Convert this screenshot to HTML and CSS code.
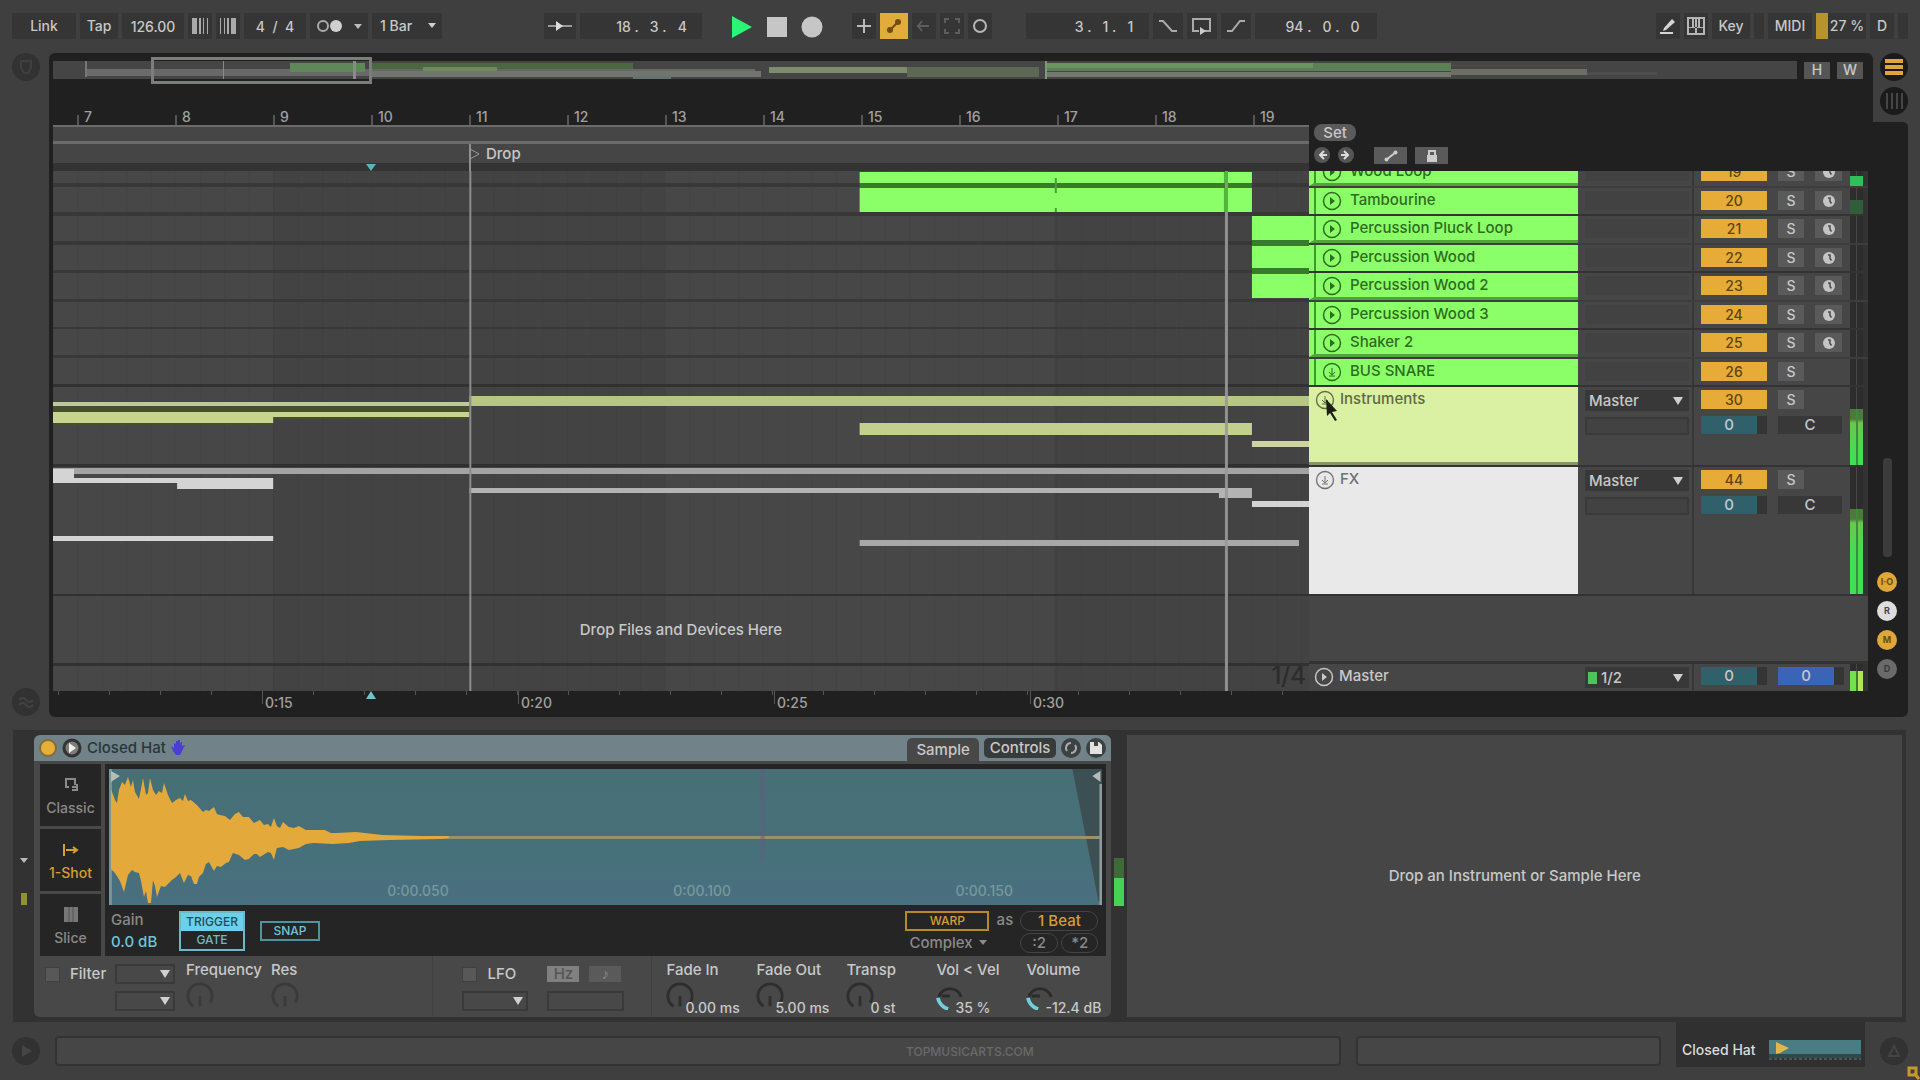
FILE: index.html
```html
<!DOCTYPE html>
<html lang="en">
<head>
  <meta charset="UTF-8" />
  <meta name="viewport" content="width=device-width, initial-scale=1.0"/>
  <title>Arrangement</title>
  <link rel="stylesheet" href="styles.css">
</head>
<body>

  <svg width="0" height="0" class="defs" aria-hidden="true">
    <symbol id="play-ring" viewBox="0 0 20 20">
      <circle cx="10" cy="10" r="8.5" fill="none" stroke="currentColor" stroke-width="1.5"/>
      <path d="M8 6l5 4-5 4z" fill="currentColor"/>
    </symbol>
    <symbol id="fold-ring" viewBox="0 0 20 20">
      <circle cx="10" cy="10" r="8.5" fill="none" stroke="currentColor" stroke-width="1.3"/>
      <path d="M10 6v6M7 10l3 3 3-3M7 14h6" fill="none" stroke="currentColor" stroke-width="1"/>
    </symbol>
    <symbol id="rec" viewBox="0 0 14 14">
      <circle cx="7" cy="7" r="6" fill="#c4c4c4"/>
      <path d="M6 4h2v3.500l1.500 2" fill="none" stroke="#4a4a4a" stroke-width="1.500"/>
    </symbol>
    <symbol id="knob" viewBox="0 0 30 30">
      <path d="M8 26A13 13 0 1 1 26 22" fill="none" stroke="currentColor" stroke-width="3"/>
      <path d="M15 15v11" stroke="currentColor" stroke-width="3"/>
    </symbol>
    <symbol id="knob-on" viewBox="0 0 30 30">
      <path d="M3 16A12.500 12.500 0 0 1 27 16" fill="none" stroke="#2b2b2b" stroke-width="3"/>
      <path d="M15 15H6" stroke="#2b2b2b" stroke-width="3"/>
      <path d="M2 17Q4 26 13 29" fill="none" stroke="#6fd0dc" stroke-width="4"/>
    </symbol>
  </svg>

  <header class="toolbar">
    <div class="tools">
      <button class="tool w-link">Link</button>
      <button class="tool w-tap">Tap</button>
      <input class="tool w-tempo" aria-label="Tempo" value="126.00">
      <button class="tool w-nudge" aria-label="Nudge down"><svg width="20" height="16"><path d="M2 0h5v16H2zM9 0h2v16H9zM13 0h1v16h-1zM17 0h1v16h-1z" fill="#aaa"/></svg></button>
      <button class="tool w-nudge" aria-label="Nudge up"><svg width="20" height="16"><path d="M2 0h1v16H2zM6 0h1v16H6zM9 0h2v16H9zM13 0h5v16h-5z" fill="#aaa"/></svg></button>
      <input class="tool w-sig" aria-label="Time signature" value="4  /  4">
      <button class="tool w-metro" aria-label="Metronome"><svg width="28" height="14"><circle cx="7" cy="7" r="5" fill="none" stroke="#aaa" stroke-width="2"/><circle cx="20" cy="7" r="6" fill="#d0d0d0"/></svg><span class="caret"></span></button>
      <span class="pick small w-bar"><select class="tool" aria-label="Quantization"><option>1 Bar</option></select></span>
    </div>

    <div class="tools center">
      <button class="tool w-follow" aria-label="Follow"><svg width="24" height="14"><path d="M0 7h24" stroke="#999" stroke-width="2"/><path d="M8 2l7 5-7 5z" fill="#ddd"/></svg></button>
      <input class="tool w-pos" aria-label="Arrangement position" value="18 .   3 .   4">
      <span class="transport">
        <button class="bare" aria-label="Play"><svg width="22" height="24"><path d="M1 1l20 11L1 23z" fill="#2bf577"/></svg></button>
        <button class="bare" aria-label="Stop"><svg width="22" height="24"><path d="M1 2h20v20H1z" fill="#c6c6c6"/></svg></button>
        <button class="bare" aria-label="Record"><svg width="22" height="24"><circle cx="11" cy="12" r="10.500" fill="#c6c6c6"/></svg></button>
      </span>
      <button class="tool w-plus" aria-label="Overdub"><svg width="16" height="16"><path d="M8 1v14M1 8h14" stroke="#bbb" stroke-width="2"/></svg></button>
      <button class="tool w-auto on" aria-label="Automation arm"><svg width="18" height="18"><path d="M4 14L14 4" stroke="#6d4d10" stroke-width="2"/><circle cx="5" cy="13" r="3" fill="#6d4d10"/><circle cx="13" cy="5" r="3" fill="#6d4d10"/></svg></button>
      <button class="tool w-plus" aria-label="Re-enable automation"><svg width="14" height="12"><path d="M0 6h12M5 1L1 6l4 5" fill="none" stroke="#5d5d5d" stroke-width="2"/></svg></button>
      <button class="tool w-plus" aria-label="Capture"><svg width="16" height="16"><path d="M1 5V1h4M11 1h4v4M15 11v4h-4M5 15H1v-4" fill="none" stroke="#5d5d5d" stroke-width="2"/></svg></button>
      <button class="tool w-plus" aria-label="Session record"><svg width="16" height="16"><circle cx="8" cy="8" r="6" fill="none" stroke="#b5b5b5" stroke-width="2"/></svg></button>
      <input class="tool w-loop" aria-label="Loop start" value="3 .   1 .   1">
      <button class="tool w-punch" aria-label="Punch in"><svg width="20" height="16"><path d="M1 3h4l9 10h5" fill="none" stroke="#aaa" stroke-width="2"/></svg></button>
      <button class="tool w-punch" aria-label="Loop"><svg width="22" height="18"><path d="M8 14H2V2h17v12h-5" fill="none" stroke="#aaa" stroke-width="2"/><path d="M9 10l6 4-6 4z" fill="#ccc"/></svg></button>
      <button class="tool w-punch" aria-label="Punch out"><svg width="20" height="16"><path d="M1 13h5l8-10h5" fill="none" stroke="#aaa" stroke-width="2"/></svg></button>
      <input class="tool w-len" aria-label="Loop length" value="94 .   0 .   0">
    </div>

    <div class="tools right">
      <button class="tool w-nudge" aria-label="Draw mode"><svg width="18" height="18"><path d="M5 11l8-9 3 3-9 8-3 1z" fill="#d5d5d5"/><path d="M1 16h13" stroke="#d5d5d5" stroke-width="2"/></svg></button>
      <button class="tool w-nudge" aria-label="Computer keyboard"><svg width="18" height="18"><path d="M1 1h16v16H1z" fill="none" stroke="#b5b5b5" stroke-width="2"/><path d="M5 1v9h2V1zM11 1v9h2V1zM8 1v16h2V1zM1 10h16v1H1z" fill="#b5b5b5"/></svg></button>
      <button class="tool w-key">Key</button>
      <span class="tool led"></span>
      <button class="tool w-midi">MIDI</button>
      <span class="tool cpu">27 %</span>
      <span class="tool w-nudge">D</span>
      <span class="tool led"></span>
    </div>
  </header>

  <main class="view">
    <div class="gutter">
      <button class="round dim" aria-label="Show browser"><svg width="14" height="16"><path d="M2 2h10v7l-3 5H5L2 9z" fill="none" stroke="#3f3f3f" stroke-width="2"/></svg></button>
      <button class="round dim" aria-label="Groove pool"><svg width="16" height="12"><path d="M1 4q4-4 7 0t7 0M1 9q4-4 7 0t7 0" fill="none" stroke="#424242" stroke-width="2"/></svg></button>
    </div>

    <section class="panel">
      <div class="overview">
        <svg class="overview-map" viewBox="0 0 1744 18" preserveAspectRatio="none">
          <rect width="1744" height="18" fill="#454545"/>
          <path d="M32 8h70v7H32z" fill="#6b6b6b"/>
          <path d="M102 8h600v7H102z" fill="#686868"/>
          <path d="M32 0h2v16h-2z" fill="#777"/>
          <path d="M237 2h75v9h-75z" fill="#5f8759"/>
          <path d="M318 2h262v6H318z" fill="#4c6842"/>
          <path d="M370 6h74v5h-74z" fill="#6e8a5c"/>
          <path d="M318 10h390v6H318z" fill="#70756d"/>
          <path d="M580 15h38v3h-38z" fill="#66736f"/>
          <path d="M716 6h138v6H716z" fill="#7c8c6d"/>
          <path d="M854 6h132v10H854z" fill="#5c6853"/>
          <path d="M992 2h406v8H992z" fill="#5d7f56"/>
          <path d="M992 2h268v5H992z" fill="#6a9560"/>
          <path d="M992 11h406v5H992z" fill="#75786f"/>
          <path d="M1398 8h136v6h-136z" fill="#6d6f65"/>
          <path d="M1398 4h136v1h-136z" fill="#574c4a"/>
          <path d="M1534 11h70v3h-70z" fill="#4d4d4d"/>
          <path d="M992 0h2v18h-2z" fill="#7d9a76"/>
          <path d="M170 0h1v18h-1zM300 0h3v18h-3z" fill="#8a8a8a"/>
        </svg>
        <div class="overview-window"></div>
        <button class="hw">H</button>
        <button class="hw">W</button>
      </div>

      <div class="timeline">
        <div class="bars">
          <span>7</span><span>8</span><span>9</span><span>10</span><span>11</span><span>12</span><span>13</span><span>14</span><span>15</span><span>16</span><span>17</span><span>18</span><span>19</span>
        </div>
        <div class="scrub"></div>
        <div class="locators">
          <svg width="12" height="14"><path d="M1 2l9 5-9 5z" fill="none" stroke="#999" stroke-width="1"/></svg>
          <span>Drop</span>
        </div>
        <div class="start-lane"><svg width="10" height="8"><path d="M0 1h10L5 8z" fill="#58b4bd"/></svg></div>

        <div class="lanes">
          <svg class="clips" viewBox="0 0 1255 520" preserveAspectRatio="none">
            <defs>
              <pattern id="beats" width="24.450" height="520" patternUnits="userSpaceOnUse"><path d="M0 0h1v520H0z" fill="#000" opacity="0.050"/></pattern>
            </defs>
            <rect width="1255" height="520" fill="#434343"/>
            <path d="M0 0h220v520H0zM611 0h390v520H611z" fill="#474747"/>
            <rect width="1255" height="520" fill="url(#beats)"/>
            <path d="M0 12h1255v4H0zM0 41h1255v4H0zM0 70h1255v4H0zM0 99h1255v3H0zM0 128h1255v3H0zM0 156h1255v2H0zM0 184h1255v3H0z" fill="#383838"/>
            <path d="M0 213h1255v3H0zM0 293h1255v3H0zM0 423h1255v2H0zM0 492h1255v3H0z" fill="#313131"/>
            <!-- percussion group -->
            <path d="M806 12h392v5H806zM1198 69h57v6h-57zM1198 97h57v6h-57z" fill="#377c28"/>
            <path d="M806 1h392v11H806zM806 17h392v24H806zM1198 45h57v24h-57zM1198 75h57v22h-57zM1198 103h57v24h-57z" fill="#8aff67"/>
            <path d="M1001 7h2v15h-2zM1001 37h2v4h-2z" fill="#4e9c3b"/>
            <!-- instruments -->
            <path d="M0 234h416v7H0zM0 252h220v2H0zM220 246h196v2H220z" fill="#44502b"/>
            <path d="M0 231h416v4H0z" fill="#bfc79c"/>
            <path d="M0 241h416v5H0zM0 241h220v11H0z" fill="#c6d48e"/>
            <path d="M416 225h839v10H416z" fill="#b7c685"/>
            <path d="M806 252h392v12H806z" fill="#c2cf8d"/>
            <path d="M1198 270h57v6h-57z" fill="#cdd3a2"/>
            <!-- fx -->
            <path d="M0 297h1255v6H0z" fill="#a3a3a3"/>
            <path d="M0 298h21v13H0zM0 307h220v5H0zM124 307h96v11h-96zM0 365h220v5H0zM1198 330h57v6h-57z" fill="#d4d4d4"/>
            <path d="M416 317h782v5H416zM1165 317h33v10h-33z" fill="#b3b3b3"/>
            <path d="M806 369h439v6H806z" fill="#a8a8a8"/>
            <path d="M416 0h2v520h-2z" fill="#8d8d8d"/>
            <path d="M1171 0h3v520h-3z" fill="#999" opacity="0.900"/>
            <path d="M1170 1h4v11h-4zM1170 17h4v24h-4z" fill="#52b63a"/>
          </svg>
          <p class="drop-hint">Drop Files and Devices Here</p>
          <span class="grid-size">1/4</span>
        </div>

        <div class="seconds">
          <span>0:15</span><span>0:20</span><span>0:25</span><span>0:30</span>
          <svg class="start-mark" width="12" height="9"><path d="M6 0l5 8H1z" fill="#6fc3cb"/></svg>
        </div>
      </div>

      <div class="headers">
        <div class="set-bar">
          <button class="pill">Set</button>
          <div class="set-row">
            <button class="dot" aria-label="Previous locator"><svg width="10" height="10"><path d="M7 1L3 5l4 4M3 5h7" fill="none" stroke="#ddd" stroke-width="2"/></svg></button>
            <button class="dot" aria-label="Next locator"><svg width="10" height="10"><path d="M3 1l4 4-4 4M7 5H0" fill="none" stroke="#ddd" stroke-width="2"/></svg></button>
            <button class="tag" aria-label="Automation mode"><svg width="14" height="12"><path d="M2 10L12 2" stroke="#ccc" stroke-width="2"/><circle cx="2.500" cy="9.500" r="2" fill="#ccc"/><circle cx="11.500" cy="2.500" r="2" fill="#ccc"/></svg></button>
            <button class="tag" aria-label="Lock envelopes"><svg width="12" height="12"><path d="M1 5h10v7H1z" fill="#ccc"/><path d="M3 5V1h6v4" fill="none" stroke="#ccc" stroke-width="2"/></svg></button>
          </div>
        </div>

        <div class="track child cut linked">
          <div class="name"><svg class="ico"><use href="#play-ring"/></svg>Wood Loop</div><div class="io"><span class="slot"></span></div>
          <div class="mix"><button class="num">19</button><button class="sq">S</button><button class="sq" aria-label="Arm"><svg width="14" height="14"><use href="#rec"/></svg></button></div>
          <div class="meter"><i class="lvl low"></i></div>
        </div>
        <div class="track child">
          <div class="name"><svg class="ico"><use href="#play-ring"/></svg>Tambourine</div><div class="io"><span class="slot"></span></div>
          <div class="mix"><button class="num">20</button><button class="sq">S</button><button class="sq" aria-label="Arm"><svg width="14" height="14"><use href="#rec"/></svg></button></div>
          <div class="meter"><i class="lvl faint"></i></div>
        </div>
        <div class="track child linked">
          <div class="name"><svg class="ico"><use href="#play-ring"/></svg>Percussion Pluck Loop</div><div class="io"><span class="slot"></span></div>
          <div class="mix"><button class="num">21</button><button class="sq">S</button><button class="sq" aria-label="Arm"><svg width="14" height="14"><use href="#rec"/></svg></button></div>
          <div class="meter"></div>
        </div>
        <div class="track child">
          <div class="name"><svg class="ico"><use href="#play-ring"/></svg>Percussion Wood</div><div class="io"><span class="slot"></span></div>
          <div class="mix"><button class="num">22</button><button class="sq">S</button><button class="sq" aria-label="Arm"><svg width="14" height="14"><use href="#rec"/></svg></button></div>
          <div class="meter"></div>
        </div>
        <div class="track child linked">
          <div class="name"><svg class="ico"><use href="#play-ring"/></svg>Percussion Wood 2</div><div class="io"><span class="slot"></span></div>
          <div class="mix"><button class="num">23</button><button class="sq">S</button><button class="sq" aria-label="Arm"><svg width="14" height="14"><use href="#rec"/></svg></button></div>
          <div class="meter"></div>
        </div>
        <div class="track child">
          <div class="name"><svg class="ico"><use href="#play-ring"/></svg>Percussion Wood 3</div><div class="io"><span class="slot"></span></div>
          <div class="mix"><button class="num">24</button><button class="sq">S</button><button class="sq" aria-label="Arm"><svg width="14" height="14"><use href="#rec"/></svg></button></div>
          <div class="meter"></div>
        </div>
        <div class="track child linked">
          <div class="name"><svg class="ico"><use href="#play-ring"/></svg>Shaker 2</div><div class="io"><span class="slot"></span></div>
          <div class="mix"><button class="num">25</button><button class="sq">S</button><button class="sq" aria-label="Arm"><svg width="14" height="14"><use href="#rec"/></svg></button></div>
          <div class="meter"></div>
        </div>
        <div class="track child">
          <div class="name"><svg class="ico"><use href="#fold-ring"/></svg>BUS SNARE</div><div class="io"><span class="slot"></span></div>
          <div class="mix"><button class="num">26</button><button class="sq">S</button></div>
          <div class="meter"></div>
        </div>

        <div class="track group instruments">
          <div class="name"><svg class="ico"><use href="#fold-ring"/></svg>Instruments
            <svg class="cursor" width="16" height="24"><path d="M1 0l11 12-5 1 5 8-2 1-5-8-3 3z" fill="#1c1f14"/></svg>
          </div>
          <div class="io"><span class="pick"><select aria-label="Instruments output"><option>Master</option></select></span><span class="slot box"></span></div>
          <div class="mix"><button class="num">30</button><button class="sq">S</button><span class="vol">0</span><span class="pan">C</span></div>
          <div class="meter"><i class="lvl"></i></div>
        </div>
        <div class="track group fx">
          <div class="name"><svg class="ico"><use href="#fold-ring"/></svg>FX</div>
          <div class="io"><span class="pick"><select aria-label="FX output"><option>Master</option></select></span><span class="slot box"></span></div>
          <div class="mix"><button class="num">44</button><button class="sq">S</button><span class="vol">0</span><span class="pan">C</span></div>
          <div class="meter"><i class="lvl"></i></div>
        </div>
        <div class="blank"></div>
        <div class="track master">
          <div class="name"><svg class="ico"><use href="#play-ring"/></svg>Master</div>
          <div class="io"><span class="pick out"><select aria-label="Master output"><option>1/2</option></select></span></div>
          <div class="mix"><span class="vol">0</span><span class="vol cue">0</span></div>
          <div class="meter"><i class="lvl"></i></div>
        </div>
      </div>
    </section>

    <aside class="side">
      <div class="switch">
        <button class="round black" aria-label="Arrangement view"><svg width="18" height="18"><path d="M0 1h18v4H0zM0 7h18v4H0zM0 13h18v4H0z" fill="#e0a63a"/></svg></button>
        <button class="round black" aria-label="Session view"><svg width="18" height="18"><path d="M2 1v16M7 1v16M12 1v16M17 1v16" stroke="#454545" stroke-width="2"/></svg></button>
      </div>
      <div class="side-body">
        <div class="thumb"></div>
        <button class="toggle amber">I·O</button>
        <button class="toggle light">R</button>
        <button class="toggle amber">M</button>
        <button class="toggle gray">D</button>
      </div>
    </aside>
  </main>

  <section class="devices">
    <div class="in-meter"><span class="caret"></span><i></i></div>

    <article class="simpler">
      <header class="device-head">
        <span class="power"></span>
        <svg class="head-play" width="20" height="20"><circle cx="10" cy="10" r="8" fill="#7d7f7d" stroke="#333" stroke-width="3"/><path d="M7 5l7 5-7 5z" fill="#f0f0f0"/></svg>
        <h2>Closed Hat</h2>
        <svg width="14" height="16"><path d="M3 3l2 1V1h2v3V0h2v4l1-2h1v4l3-1-3 6-2 4H5L2 11 0 6l3 2z" fill="#4a3fd0"/></svg>
        <button class="tab active">Sample</button>
        <button class="tab">Controls</button>
        <button class="mini" aria-label="Hot-swap"><svg width="14" height="14"><path d="M7 2a5 5 0 0 0-4 8M7 12a5 5 0 0 0 4-8" fill="none" stroke="#aaa" stroke-width="2"/></svg></button>
        <button class="mini" aria-label="Save preset"><svg width="12" height="12"><path d="M0 0h9l3 3v9H0z" fill="#e2e2e2"/><path d="M4 0h4v4H4z" fill="#444"/></svg></button>
      </header>

      <div class="sampler">
        <nav class="modes">
          <button><svg width="16" height="16"><path d="M6 11H3V3h9v6M9 11l5 0M14 8v6H9" fill="none" stroke="#8a8a8a" stroke-width="2"/></svg>Classic</button>
          <button class="active"><svg width="18" height="14"><path d="M2 1v12M4 7h10M11 4l4 3-4 3" fill="none" stroke="#d79e35" stroke-width="2"/></svg>1-Shot</button>
          <button><svg width="14" height="15"><path d="M0 0h14v15H0z" fill="#777"/><path d="M5 0v15M9 0v15" stroke="#555"/></svg>Slice</button>
        </nav>

        <div class="display">
          <div class="wave">
            <svg class="wave-shape" viewBox="0 0 994 136" preserveAspectRatio="none">
              <path d="M964 0h30v132h-4z" fill="#3c5054"/>
              <path d="M0 0h3v136H0z" fill="#779499"/>
              <path d="M300 67h692v3H300z" fill="#98916a"/>
              <path d="M2 68L2 20 6 31 8 34 10 21 13 13 16 16 19 8 22 18 24 11 26 23 30 30 32 20 34 9 37 26 39 24 41 9 44 21 47 26 50 22 53 24 55 14 57 20 59 26 63 34 67 31 71 29 74 32 76 25 79 32 82 31 88 36 94 43 97 41 100 42 105 38 108 45 111 46 116 47 121 51 126 45 130 43 134 48 140 48 145 54 151 51 155 56 159 55 162 58 165 49 168 57 171 59 174 53 180 58 185 59 190 57 197 61 216 61 222 64 228 64 247 63 274 66 312 67 340 67 340 69 331 70 281 71 251 72 240 74 224 75 205 74 197 75 190 79 180 81 174 78 168 79 165 91 162 84 159 83 151 88 148 85 145 85 140 90 136 91 130 86 124 84 120 93 117 94 112 98 108 97 105 102 100 93 97 95 94 104 90 108 88 115 85 115 82 107 79 106 75 114 71 104 67 108 63 111 59 115 56 118 52 117 48 128 46 117 44 111 42 134 39 134 37 122 35 128 32 112 30 104 26 103 23 101 19 106 15 123 11 112 6 104 2 100z" fill="#e3a93a"/>
              <path d="M652 0h4v92h-4z" fill="#675a82" opacity="0.500"/>
              <path d="M991 15h3v121h-3z" fill="#8b9a9c"/>
              <path d="M2 2l9 5-9 6zM992 2l-8 5 8 6z" fill="#b5bcb8"/>
            </svg>
            <div class="wave-times"><span>0:00.050</span><span>0:00.100</span><span>0:00.150</span></div>
          </div>
          <div class="wave-tools">
            <label class="gain">Gain<input value="0.0 dB"></label>
            <div class="trigger"><button class="lit">TRIGGER</button><button>GATE</button></div>
            <button class="snap">SNAP</button>
            <div class="warp">
              <button class="warp-btn">WARP</button><span>as</span><button class="oval amber-text">1 Beat</button>
              <span class="pick bare-pick"><select aria-label="Warp mode"><option>Complex</option></select></span><span></span><span class="halves"><button class="oval">:2</button><button class="oval">*2</button></span>
            </div>
          </div>
        </div>
      </div>

      <div class="params">
        <div class="filter">
          <label><input type="checkbox">Filter</label>
          <span class="pick"><select aria-label="Filter type"><option></option></select></span>
          <span class="pick second"><select aria-label="Filter circuit"><option></option></select></span>
        </div>
        <div class="dial off freq"><span>Frequency</span><svg class="k"><use href="#knob"/></svg></div>
        <div class="dial off res"><span>Res</span><svg class="k"><use href="#knob"/></svg></div>
        <div class="lfo">
          <label><input type="checkbox">LFO</label>
          <span class="rates"><button>Hz</button><button class="off">♪</button></span>
          <span class="pick"><select aria-label="LFO shape"><option></option></select></span>
          <input class="rate" aria-label="LFO rate">
        </div>
        <div class="dials">
          <div class="dial"><span>Fade In</span><svg class="k"><use href="#knob"/></svg><b>0.00 ms</b></div>
          <div class="dial"><span>Fade Out</span><svg class="k"><use href="#knob"/></svg><b>5.00 ms</b></div>
          <div class="dial short"><span>Transp</span><svg class="k"><use href="#knob"/></svg><b>0 st</b></div>
          <div class="dial"><span>Vol &lt; Vel</span><svg class="k"><use href="#knob-on"/></svg><b>35 %</b></div>
          <div class="dial"><span>Volume</span><svg class="k"><use href="#knob-on"/></svg><b>-12.4 dB</b></div>
        </div>
      </div>
    </article>

    <div class="out-meter"><i></i></div>
    <div class="drop-area">Drop an Instrument or Sample Here</div>
  </section>

  <footer class="status">
    <button class="round dim" aria-label="Show info"><svg width="14" height="14"><path d="M3 1l10 6-10 6z" fill="#454545"/></svg></button>
    <div class="field wide">TOPMUSICARTS.COM</div>
    <div class="field"></div>
    <div class="chain">Closed Hat
      <svg width="92" height="20"><path d="M0 0h92v14H0z" fill="#4a7c84"/><path d="M0 14h92v4H0z" fill="#30474b"/><path d="M7 2l13 6-9 5-4 1z" fill="#e3b64a"/><path d="M0 19h92" stroke="#777" stroke-dasharray="3 2"/></svg>
    </div>
    <button class="round dim" aria-label="Detail view"><svg width="14" height="14"><path d="M7 2l5 10H2z" fill="none" stroke="#444" stroke-width="2"/></svg></button>
    <svg class="corner" width="14" height="16"><path d="M3 4h7v7H3zM8 9l5 6" fill="none" stroke="#c9972f" stroke-width="3"/></svg>
  </footer>

</body>
</html>
```

FILE: styles.css
```css
* {
  box-sizing: border-box;
}

body {
  margin: 0;
  min-height: 100vh;
  overflow: hidden;
  background: #3f3f3f;
  color: #c8c8c8;
  font-family: Inter, "Liberation Sans", sans-serif;
  font-size: 15px;
  font-weight: 500;
  line-height: 18px;
}

button, input, select {
  font: inherit;
  color: inherit;
  border: 0;
  margin: 0;
  padding: 0;
  border-radius: 0;
  background: none;
}

button {
  display: flex;
  align-items: center;
  justify-content: center;
}

svg {
  display: block;
  flex: none;
}

.defs {
  position: absolute;
}

/* toolbar */

.toolbar {
  display: grid;
  grid-template-columns: 1fr auto 1fr;
  padding: 13px 12px 0;
  height: 53px;
  font-size: 14px;
}

.tools {
  display: flex;
  gap: 4px;
  height: 26px;
}

.tools.right {
  justify-content: flex-end;
}

.tool {
  display: flex;
  align-items: center;
  justify-content: center;
  height: 26px;
  background: #353535;
  text-align: center;
}

.tool.on {
  background: #e2ac3d;
}

.w-link { width: 64px; }
.w-tap { width: 38px; }
.w-tempo { width: 62px; }
.w-nudge { width: 24px; }
.w-sig { width: 62px; }
.w-metro { width: 58px; gap: 10px; }
.w-bar { width: 70px; }
.w-follow { width: 32px; }
.w-pos { width: 122px; padding-left: 22px; }
.w-plus { width: 24px; }
.w-auto { width: 28px; }
.w-loop { width: 123px; margin-left: 30px; padding-left: 34px; }
.w-punch { width: 30px; }
.w-len { width: 122px; padding-left: 14px; }
.w-key { width: 38px; }
.w-midi { width: 44px; }

.led {
  width: 10px;
}

.cpu {
  width: 50px;
  border-left: 12px solid #b8932c;
}

.bare, .transport {
  display: flex;
}

.transport {
  gap: 13px;
  padding: 1px 25px 0;
}

.caret {
  border: 4px solid transparent;
  border-top: 5px solid #bbb;
  border-bottom: 0;
}

.pick {
  display: block;
  position: relative;
}

.pick select {
  width: 100%;
  height: 100%;
  appearance: none;
  text-align: left;
  padding-left: 4px;
}

.pick::after {
  content: "";
  position: absolute;
  right: 6px;
  top: 50%;
  margin-top: -4px;
  border: 5px solid transparent;
  border-top: 8px solid #d0d0d0;
  border-bottom: 0;
  pointer-events: none;
}

.pick.small select {
  padding-left: 8px;
}

.pick.small::after, .bare-pick::after {
  margin-top: -3px;
  border-width: 5px 4px 0;
}

.round {
  width: 28px;
  height: 28px;
  border-radius: 50%;
}

.round.dim {
  background: #323232;
}

.round.black {
  background: #1b1b1b;
}

/* arrangement */

.view {
  display: grid;
  grid-template-columns: 49px minmax(0, 1fr) 35px;
  margin-right: 12px;
}

.gutter {
  display: flex;
  flex-direction: column;
  justify-content: space-between;
  padding: 0 12px 1px;
}

.panel {
  display: grid;
  grid-template-columns: minmax(0, 1fr) 559px;
  background: #202020;
  padding: 8px 5px 0 4px;
  border-radius: 6px 6px 0 6px;
}

.overview {
  grid-column: 1 / -1;
  display: flex;
  align-items: center;
  gap: 7px;
  height: 18px;
  padding-right: 5px;
  position: relative;
}

.overview-map {
  flex: 1;
  min-width: 0;
  height: 18px;
}

.overview-window {
  position: absolute;
  left: 98px;
  top: -4px;
  width: 221px;
  height: 27px;
  border: 3px solid #7b7f7b;
}

.hw {
  width: 26px;
  height: 17px;
  background: #555;
  font-size: 14px;
}

.timeline {
  min-width: 0;
}

.bars {
  display: flex;
  height: 46px;
  padding: 29px 0 0 24px;
  overflow: hidden;
  color: #a0a0a0;
  font-size: 14px;
}

.bars span {
  flex: none;
  width: 98px;
  padding-left: 7px;
  background: linear-gradient(#555, #555) 0 7px / 2px 11px no-repeat;
}

.scrub {
  height: 19px;
  background: #464646;
  border-top: 2px solid #6b6b6b;
  border-bottom: 3px solid #6b6b6b;
}

.locators {
  display: flex;
  align-items: center;
  gap: 5px;
  height: 19px;
  padding-left: 416px;
  background: linear-gradient(#8d8d8d, #8d8d8d) 416px 0 / 2px 19px no-repeat #454545;
}

.start-lane {
  height: 8px;
  padding-left: 313px;
  background: linear-gradient(#8d8d8d, #8d8d8d) 416px 0 / 2px 8px no-repeat #333;
}

.lanes {
  position: relative;
  height: 520px;
}

.clips {
  width: 100%;
  height: 520px;
}

.drop-hint {
  position: absolute;
  left: 0;
  right: 0;
  top: 450px;
  margin: 0;
  text-align: center;
}

.grid-size {
  position: absolute;
  right: 3px;
  bottom: 4px;
  font-size: 24px;
  line-height: 22px;
  color: #2c2c2c;
}

.seconds {
  display: flex;
  position: relative;
  height: 26px;
  padding-left: 209px;
  background: repeating-linear-gradient(90deg, #555 0 1px, transparent 1px 51px) 5px 0 / 100% 4px no-repeat;
  color: #a0a0a0;
  font-size: 14px;
}

.seconds span {
  flex: none;
  width: 256px;
  padding: 3px 0 0 3px;
  background: linear-gradient(#555, #555) 0 0 / 1px 13px no-repeat;
}

.start-mark {
  position: absolute;
  left: 312px;
  top: 0;
}

/* track headers */

.headers {
  display: flex;
  flex-direction: column;
  min-width: 0;
}

.set-bar {
  height: 92px;
  padding: 45px 0 0 5px;
}

.pill {
  width: 42px;
  height: 17px;
  border-radius: 8px;
  background: #5a5a5a;
}

.set-row {
  display: flex;
  gap: 8px;
  padding-top: 6px;
}

.dot {
  width: 16px;
  height: 16px;
  border-radius: 50%;
  background: #555;
}

.tag {
  width: 33px;
  height: 17px;
  background: #5a5a5a;
}

.dot + .tag {
  margin-left: 12px;
}

.track {
  display: grid;
  grid-template-columns: 269px 4px 110px 4px 152px 20px;
  height: 28px;
  background: #464646;
  border-bottom: 2px solid #333;
  flex: none;
}

.track .name { grid-column: 1; }
.track .io { grid-column: 3; }
.track .mix { grid-column: 5; }
.track .meter { grid-column: 6; }

.linked {
  height: 29px;
  border-bottom-color: #3d3d3d;
}

.name {
  display: flex;
  align-items: flex-start;
  gap: 5px;
  padding: 3px 0 0 5px;
  color: #2f6b22;
}

.child .name {
  gap: 8px;
  padding-left: 8px;
  border-left: 5px solid #8aff67;
  background: #8aff67;
  box-shadow: inset 2px 0 0 #3f9a2c;
}

.linked .name {
  border-bottom: 3px solid #4fa53c;
}

.ico {
  width: 20px;
  height: 20px;
}

/* first row is scrolled half out of view, keep its lower half */
.cut {
  grid-template-rows: 15px;
  height: 17px;
  overflow: hidden;
  align-items: end;
}

.cut > div {
  height: 27px;
}

.io {
  padding: 3px 3px 0;
  border-right: 2px solid #383838;
  margin-right: -2px;
}

.slot {
  display: block;
  height: 19px;
  background: #424242;
}

.mix {
  display: grid;
  grid-template-columns: 66px 26px 27px;
  grid-auto-rows: 19px;
  column-gap: 11px;
  row-gap: 7px;
  padding: 3px 0 0 5px;
  align-content: start;
}

.num {
  background: #e6ac37;
  color: #5e430d;
  font-size: 14px;
}

.sq {
  background: #5a5a5a;
  font-size: 14px;
}

.meter {
  display: flex;
  align-items: flex-end;
  padding: 0 5px 0 2px;
  background: linear-gradient(90deg, transparent 2px, #2d2d2d 2px 8px, #464646 8px 9px, #2d2d2d 9px 15px, #333 15px);
}

.lvl {
  width: 14px;
  background: linear-gradient(90deg, transparent 6px, #3a8d40 6px 8px, transparent 8px), linear-gradient(#4b7a3a 10px, #6cc650 14px, #3fe056 50px);
}

.lvl.low { height: 10px; background: #2fc05a; }
.lvl.faint { height: 14px; background: #305e3a; }
.instruments .lvl { height: 56px; }
.fx .lvl { height: 85px; }
.master .lvl { height: 20px; background: linear-gradient(90deg, #76e04e 6px, #3a7d35 6px 8px, #b4e45a 8px); }

.group .name {
  color: #5f6a41;
  padding-left: 6px;
}

.instruments {
  height: 80px;
}

.instruments .name {
  position: relative;
  background: #daf0a3;
  border-bottom: 3px solid #87936a;
}

.fx {
  height: 129px;
}

.fx .name {
  background: #e9e9e9;
  color: #707070;
}

.group .pick {
  height: 21px;
  background: #383838;
}

.slot.box {
  height: 18px;
  margin-top: 6px;
  border: 2px solid #3a3a3a;
}

.vol {
  grid-column: 1;
  height: 18px;
  text-align: center;
  border-right: 10px solid #353535;
  background: #30606a;
}

.pan {
  grid-column: 2 / 4;
  height: 18px;
  text-align: center;
  background: #383838;
}

.cursor {
  position: absolute;
  left: 16px;
  top: 12px;
}

.blank {
  height: 68px;
  background: #464646;
  border-bottom: 3px solid #333;
}

.master {
  height: 27px;
  border: 0;
}

.master .name {
  color: #c8c8c8;
}

.master .pick {
  height: 21px;
  background: #383838;
}

.out select {
  padding-left: 16px;
}

.out::before {
  content: "";
  position: absolute;
  left: 3px;
  top: 5px;
  width: 9px;
  height: 12px;
  background: #4dc45c;
}

.master .mix {
  grid-template-columns: 66px 66px;
}

.cue {
  grid-column: 2;
  background: #3a64b8;
}

.side {
  display: flex;
  flex-direction: column;
  align-items: flex-end;
}

.switch {
  display: flex;
  flex-direction: column;
  gap: 6px;
  height: 69px;
}

.side-body {
  flex: 1;
  width: 100%;
  display: flex;
  flex-direction: column;
  align-items: center;
  gap: 9px;
  padding: 336px 7px 0 0;
  background: #202020;
  border-radius: 0 5px 6px 0;
}

.thumb {
  width: 9px;
  height: 99px;
  margin-bottom: 6px;
  border-radius: 4px;
  background: #3c3c3c;
}

.toggle {
  width: 20px;
  height: 20px;
  border-radius: 50%;
  font-size: 9px;
  font-weight: 700;
}

.toggle.amber { background: #e0a63a; color: #6b4c10; }
.toggle.light { background: #ddd; color: #444; }
.toggle.gray { background: #6a6a6a; color: #3a3a3a; }

/* device view */

.devices {
  display: flex;
  margin: 13px 14px 0 13px;
  padding: 5px 4px 5px 0;
  height: 292px;
  background: #323232;
}

.in-meter {
  width: 21px;
  display: flex;
  flex-direction: column;
  align-items: center;
  padding-top: 123px;
  gap: 30px;
}

.in-meter i {
  width: 6px;
  height: 12px;
  background: #8f922e;
}

.simpler {
  flex: 1078;
  display: flex;
  flex-direction: column;
  background: #484848;
  border-radius: 6px;
  overflow: hidden;
}

.device-head {
  display: flex;
  align-items: center;
  height: 26px;
  gap: 5px;
  padding: 0 5px;
  background: #718388;
}

.device-head h2 {
  margin: 0;
  font: inherit;
  color: #27363c;
}

.power {
  width: 18px;
  height: 18px;
  border-radius: 50%;
  background: #e8ae3a;
  border: 2px solid #836c35;
}

.tab {
  height: 20px;
  padding: 0 6px;
  border-radius: 5px;
  background: #383b3b;
}

.tab.active {
  align-self: flex-end;
  height: 23px;
  margin-left: auto;
  padding: 0 9px;
  border-radius: 5px 5px 0 0;
  background: #484848;
}

.mini {
  width: 20px;
  height: 20px;
  border-radius: 50%;
  background: #3c4244;
}

.sampler {
  display: flex;
  gap: 4px;
  margin: 3px 5px 0 6px;
}

.modes {
  display: flex;
  flex-direction: column;
  gap: 3px;
  width: 61px;
  font-size: 14px;
}

.modes button {
  flex: 1;
  flex-direction: column;
  justify-content: flex-end;
  gap: 7px;
  padding-bottom: 9px;
  background: #252525;
  color: #8a8a8a;
}

.modes .active {
  color: #d79e35;
}

.display {
  flex: 1;
  background: #252525;
  padding: 5px 4px 0 4px;
}

.wave {
  position: relative;
  height: 136px;
  background: linear-gradient(#476f75, #46707a 60%, #4a6f80);
}

.wave-shape {
  width: 100%;
  height: 136px;
}

.wave-times {
  position: absolute;
  left: 28%;
  right: 9%;
  bottom: 5px;
  display: flex;
  justify-content: space-between;
  font-size: 14px;
  color: #76999d;
}

.wave-tools {
  display: flex;
  align-items: flex-start;
  height: 51px;
  padding: 6px 4px 0 2px;
}

.gain {
  display: flex;
  flex-direction: column;
  gap: 4px;
  width: 68px;
  color: #8a8a8a;
}

.gain input {
  width: 60px;
  color: #71c4d8;
}

.trigger {
  width: 66px;
  border: 2px solid #6fb8c8;
  font-size: 12px;
  color: #6fb8c8;
}

.trigger button {
  width: 100%;
  height: 18px;
}

.trigger .lit {
  background: #6bd1ea;
  color: #234c58;
}

.snap {
  width: 60px;
  height: 20px;
  margin: 10px 0 0 15px;
  border: 2px solid #4f939f;
  font-size: 12px;
  color: #71c4d8;
}

.warp {
  display: grid;
  grid-template-columns: 84px 25px 78px;
  gap: 2px 3px;
  margin-left: auto;
  color: #8a8a8a;
  text-align: center;
}

.warp-btn {
  height: 20px;
  border: 2px solid #b8882d;
  font-size: 12px;
  color: #d79e35;
}

.oval {
  flex: 1;
  height: 20px;
  border: 1px solid #444;
  border-radius: 10px;
}

.amber-text {
  color: #d79e35;
}

.halves {
  display: flex;
  gap: 3px;
}

.bare-pick::after {
  right: 2px;
  border-top-color: #8a8a8a;
}

.params {
  display: flex;
  flex: 1;
  padding-left: 11px;
}

.params label {
  display: flex;
  align-items: center;
  gap: 10px;
}

.params input[type="checkbox"] {
  appearance: none;
  width: 15px;
  height: 15px;
  background: #585858;
  border: 1px solid #404040;
}

.filter {
  display: grid;
  grid-template-columns: 70px 60px;
  grid-auto-rows: 20px;
  row-gap: 7px;
  padding-top: 8px;
}

.filter .second {
  grid-column: 2;
}

.params .pick, .rate {
  border: 2px solid #3a3a3a;
}

.params .pick::after {
  right: 3px;
}

.dial {
  width: 90px;
  flex: none;
  position: relative;
  padding-top: 5px;
}

.dial .k {
  width: 28px;
  height: 28px;
  margin-top: 3px;
  color: #2e2e2e;
}

.dial b {
  position: absolute;
  left: 19px;
  bottom: 0;
  font-weight: 500;
  font-size: 14px;
  white-space: nowrap;
}

.dial.off .k {
  color: #3a3a3a;
}

.freq {
  width: 85px;
  margin-left: 11px;
}

.res {
  flex: 1;
}

.lfo {
  display: grid;
  grid-template-columns: 66px 77px;
  grid-auto-rows: 20px;
  gap: 7px 19px;
  padding: 8px 27px 0 29px;
  border-left: 1px solid #404040;
  border-right: 1px solid #404040;
}

.rates {
  display: flex;
  align-items: center;
  gap: 10px;
}

.rates button {
  width: 32px;
  height: 16px;
  background: #808080;
  color: #555;
}

.rates .off {
  background: #5a5a5a;
  color: #888;
}

.rate {
  min-width: 0;
}

.dials {
  display: flex;
  padding-left: 14px;
  width: 459px;
}

.dial.short b {
  left: 24px;
}

.out-meter {
  width: 16px;
  display: flex;
  justify-content: center;
  align-items: flex-start;
  padding-top: 123px;
}

.out-meter i {
  width: 10px;
  height: 48px;
  background: linear-gradient(#3d6b35 20px, #47d257 20px);
}

.drop-area {
  flex: 775;
  display: flex;
  align-items: center;
  justify-content: center;
  background: #464646;
}

/* status bar */

.status {
  display: grid;
  grid-template-columns: 28px 1288fr 305fr 189px 28px;
  column-gap: 15px;
  align-items: center;
  padding: 0 12px;
  position: relative;
  height: 58px;
}

.field {
  height: 30px;
  background: #464646;
  border: 2px solid #333;
  border-radius: 4px;
  font-size: 12px;
  line-height: 28px;
  color: #6a6a6a;
}

.field.wide {
  padding-left: 66%;
}

.chain {
  display: flex;
  align-items: center;
  justify-content: space-between;
  align-self: flex-start;
  height: 45px;
  padding: 10px 4px 0 6px;
  background: #303030;
  color: #dcdcdc;
  white-space: nowrap;
  font-size: 14px;
}

.corner {
  position: absolute;
  right: 0;
  bottom: 0;
}
```
